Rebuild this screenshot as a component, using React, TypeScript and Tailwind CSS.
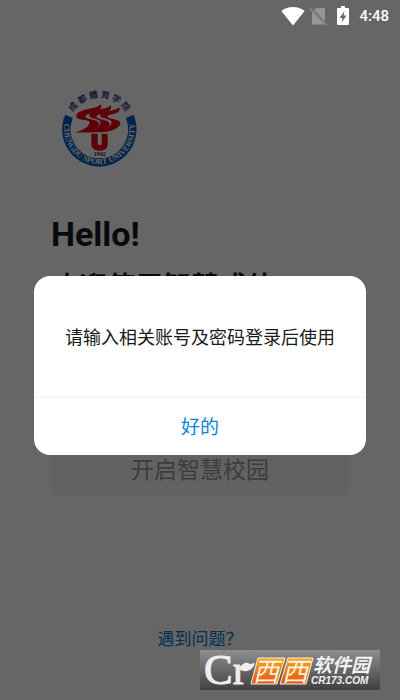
import type { ReactNode } from 'react';

function CurvedText({ id, children, size, fill, font }: {
  id: string;
  children: ReactNode;
  size: number;
  fill: string;
  font: string;
}) {
  return (
    <text fontSize={size} fill={fill} fontWeight="bold" fontFamily={font} textAnchor="middle">
      <textPath href={`#${id}`} startOffset="50%">
        {children}
      </textPath>
    </text>
  );
}

function UniversityLogo() {
  return (
    <svg viewBox="30 30 240 240" className="size-20 overflow-visible" role="img" aria-label="成都體育学院">
      <defs>
        <path id="seal-top" d="M53 148 A95 95 0 0 1 243 148" />
        <path id="seal-bottom" d="M50 106 A106 106 0 1 0 246 106" />
      </defs>
      <path d="M57 109 A99 99 0 1 0 239 109" fill="none" stroke="#0055bb" strokeWidth="25" />
      <CurvedText id="seal-top" size={26} fill="#28477a" font="Liberation Serif, Noto Sans CJK TC, serif">
        成 都 體 育 学 院
      </CurvedText>
      <CurvedText id="seal-bottom" size={24} fill="#ffffff" font="Liberation Serif, serif">
        CHENGDU SPORT UNIVERSITY
      </CurvedText>
      <g fill="#e80016">
        <path d="M153 71 C147 88 82 84 79 107 C77 124 117 115 119 127 C119 140 100 150 78 157 C112 158 143 150 147 134 C150 116 106 121 106 109 C110 96 162 100 153 71Z" />
        <path d="M182 74 C175 90 119 86 118 105 C118 119 149 114 151 127 C151 141 132 151 110 157 C144 158 176 149 179 134 C182 117 139 121 139 109 C143 98 192 102 182 74Z" />
        <path d="M207 80 C202 96 151 89 150 105 C151 118 183 114 185 126 C184 141 164 151 144 157 C176 157 207 147 211 131 C213 116 172 119 172 109 C175 100 217 106 207 80Z" />
        <path d="M78 157C108 150 174 152 200 142C188 155 160 158 78 157Z" />
        <path d="M124 161H143V190Q143 196 149 196Q155 196 155 190V161H173V193Q173 212 149 212Q124 212 124 193Z" />
      </g>
      <text x="149" y="229" textAnchor="middle" fontSize="18" fontWeight="bold" fontFamily="Liberation Serif, serif" fill="#202020">
        1942
      </text>
    </svg>
  );
}

function StatusBar() {
  return (
    <div className="flex h-8 items-center justify-end pr-[11px] text-white">
      <svg viewBox="0 0 24 24" className="mr-1 size-6" fill="currentColor" aria-hidden="true">
        <path d="M12.01 21.49L23.64 7c-.45-.34-4.93-4-11.64-4C5.28 3 .81 6.66.36 7l11.63 14.49.01.01.01-.01z" />
      </svg>
      <svg viewBox="0 0 20 20" className="mr-2 size-5" aria-hidden="true">
        <path d="M7 2H16V15.500L5 4ZM3 5.500L15.500 18.500H3Z" fill="#969696" />
        <path d="M1 2.500L17.500 19" stroke="#8c8c8c" strokeWidth="1.500" />
      </svg>
      <svg viewBox="0 0 12 20" className="mr-[10px] h-5 w-3" fill="currentColor" aria-hidden="true">
        <path fillRule="evenodd" d="M4 0H8V2H11Q12 2 12 3V18Q12 19 11 19H1Q0 19 0 18V3Q0 2 1 2H4ZM7.500 5L2.500 12H5.500L4.500 16.500L9.500 9.500H6.500Z" />
      </svg>
      <span className="text-[15px] font-medium">4:48</span>
    </div>
  );
}

function Watermark() {
  return (
    <svg viewBox="0 0 180 40" className="h-10 w-45 overflow-visible" role="img" aria-label="西西软件园 CR173.COM">
      <defs>
        <linearGradient id="plate" x1="0" y1="0" x2="0" y2="1">
          <stop offset="0" stopColor="#8e8e8e" />
          <stop offset="1" stopColor="#414141" />
        </linearGradient>
        <linearGradient id="tile" x1="0" y1="0" x2="0" y2="1">
          <stop offset="0" stopColor="#f5a524" />
          <stop offset="1" stopColor="#e2561d" />
        </linearGradient>
      </defs>
      <rect width="180" height="40" fill="url(#plate)" />
      <text x="4" y="34" fill="#eeeeee" stroke="#eeeeee" strokeWidth="1" fontFamily="Liberation Serif, serif" fontSize="43">
        Cr
      </text>
      <path d="M40 20C41 13 46 11 50 14L55 13C53 20 47 23 40 20Z" fill="#eeeeee" />
      <g fill="url(#tile)" stroke="#fff3dc" strokeWidth="1">
        <path d="M58 8H85L77 34H51Z" />
        <path d="M88 8H113L106 34H80Z" />
      </g>
      <g fill="#fff3dc" fontFamily="Noto Sans CJK SC, sans-serif" fontSize="26" fontStyle="italic">
        <text x="53" y="31">西</text>
        <text x="82" y="31">西</text>
      </g>
      <g fill="#f2f2f2" fontWeight="bold" fontStyle="italic">
        <text x="113" y="22" fontSize="19" fontFamily="Noto Sans CJK SC, sans-serif">软件园</text>
        <text x="111" y="34" fontSize="10" fontFamily="Liberation Sans, sans-serif">CR173.COM</text>
      </g>
    </svg>
  );
}

export default function App() {
  return (
    <div className="relative flex min-h-screen flex-col bg-white font-['Roboto','Noto_Sans_CJK_SC',sans-serif]">
      <main className="flex flex-1 flex-col px-[51px] pt-[90px] pb-[49px]">
        <div className="pl-[9px]">
          <UniversityLogo />
        </div>
        <h1 className="mt-11 text-[34px] leading-10 font-bold text-[#1a1a1a]">Hello!</h1>
        <h2 className="mt-4 text-[28px] leading-9 font-bold text-[#1a1a1a]">欢迎使用智慧成体</h2>
        <button className="mt-[135px] h-14 rounded-lg bg-[#f5f5f5] pt-1 text-[23px] text-[#999999]">开启智慧校园</button>
        <a href="#help" className="mt-auto self-center text-[17px] leading-6 text-[#0079d0]">
          遇到问题？
        </a>
      </main>

      <div className="absolute inset-0 flex flex-col bg-black/60">
        <StatusBar />
        <div className="flex flex-1 flex-col justify-center px-[34px] pb-px">
          <div role="dialog" aria-modal="true" aria-label="提示" className="rounded-2xl bg-white text-center">
            <p className="pt-[49px] pb-[47px] text-lg leading-[25px] text-[#1a1a1a]">请输入相关账号及密码登录后使用</p>
            <button className="h-[58px] w-full border-t border-gray-100 pt-1 text-[19px] text-[#0b84d8]">好的</button>
          </div>
        </div>
      </div>

      <div className="absolute right-5 bottom-[10px]">
        <Watermark />
      </div>
    </div>
  );
}
